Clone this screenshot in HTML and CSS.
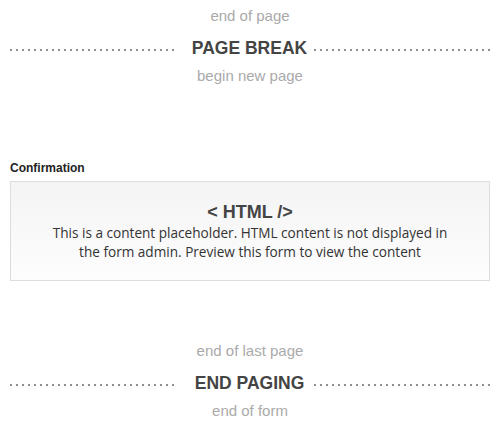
FILE: index.html
```html
<!DOCTYPE html>
<html>
<head>
<meta charset="utf-8">
<link rel="stylesheet" href="styles.css">
</head>
<body>
<div class="page">
  <section class="break break-top">
    <div class="caption">end of page</div>
    <div class="divider">
      <span class="dots dots-left"></span>
      <span class="title">PAGE BREAK</span>
      <span class="dots dots-right"></span>
    </div>
    <div class="caption">begin new page</div>
  </section>

  <section class="field">
    <div class="label">Confirmation</div>
    <div class="html-box">
      <div class="html-title">&lt; HTML /&gt;</div>
      <p class="html-text">This is a content placeholder. HTML content is not displayed in<br>the form admin. Preview this form to view the content</p>
    </div>
  </section>

  <section class="break break-bottom">
    <div class="caption">end of last page</div>
    <div class="divider">
      <span class="dots dots-left"></span>
      <span class="title">END PAGING</span>
      <span class="dots dots-right"></span>
    </div>
    <div class="caption">end of form</div>
  </section>
</div>
</body>
</html>
```

FILE: styles.css
```css
html, body {
  margin: 0;
  padding: 0;
  background: #ffffff;
}

body {
  font-family: "Liberation Sans", Arial, sans-serif;
  width: 500px;
  height: 427px;
  overflow: hidden;
}

.page {
  padding: 0 10px;
}

.break-top {
  padding-top: 7px;
}

.caption {
  font-size: 15px;
  line-height: 18px;
  color: #aaaaaa;
  text-align: center;
}

.divider {
  display: grid;
  grid-template-columns: 166px 1fr 176px;
  align-items: center;
  margin: 13px 0 9px;
  height: 20px;
}

.dots {
  display: block;
  height: 2px;
  margin-top: 3px;
  background-image: repeating-linear-gradient(to right, #8f8f8f 0, #8f8f8f 2px, transparent 2px, transparent 6px);
}

.title {
  font-size: 17.5px;
  line-height: 20px;
  font-weight: bold;
  color: #444444;
  text-align: center;
  padding-left: 9px;
  white-space: nowrap;
}

.field {
  margin-top: 76px;
}

.label {
  font-size: 12px;
  line-height: 14px;
  font-weight: bold;
  color: #222222;
}

.html-box {
  margin-top: 6px;
  height: 98px;
  border: 1px solid #dddddd;
  background: linear-gradient(to bottom, #f4f4f4 0%, #fdfdfd 100%);
  text-align: center;
  box-sizing: content-box;
}

.html-title {
  margin-top: 20px;
  font-size: 18px;
  line-height: 20px;
  font-weight: bold;
  color: #444444;
}

.html-text {
  margin: 1px 0 0;
  font-family: "Open Sans", "Noto Sans", sans-serif;
  font-size: 13.6px;
  line-height: 19px;
  color: #333333;
}

.break-bottom {
  margin-top: 61px;
}
```
